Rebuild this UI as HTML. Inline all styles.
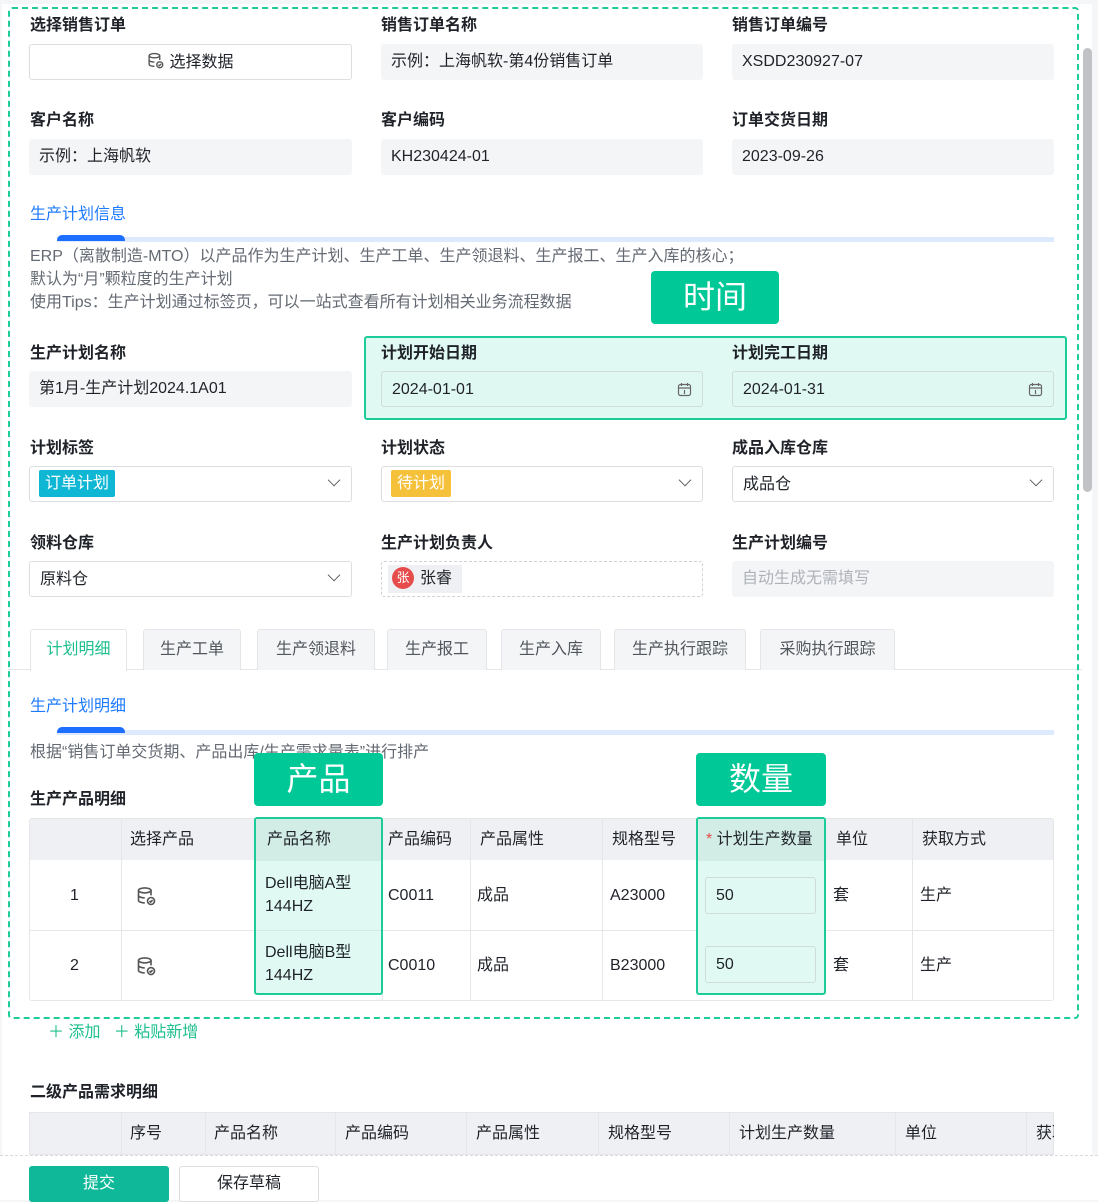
<!DOCTYPE html>
<html><head><meta charset="utf-8"><style>
*{box-sizing:border-box;margin:0;padding:0}
body{width:1098px;height:1200px;overflow:hidden;background:#f5f6f7;font-family:"Liberation Sans","Noto Sans CJK SC",sans-serif;color:#1f2329;position:relative}
.a{position:absolute}
.card{left:2px;top:4px;width:1090px;height:1196px;background:#fff}
.lb{font-size:16px;font-weight:bold;color:#1f2329;line-height:20px}
.in{height:36px;border-radius:3px;font-size:16px;line-height:36px;padding-left:10px;color:#1f2329}
.gray{background:#f4f5f7}
.bd{background:#fff;border:1px solid #dcdee2}
.sec{font-size:16px;color:#1e7bff;line-height:20px}
.bar{height:5px;background:#dde9fc}
.barb{height:6px;background:#1e6fff;border-radius:5px 5px 0 0;width:68px}
.txt{font-size:16px;color:#646a73}
.badge{background:#00c896;color:#fff;font-size:32px;text-align:center;border-radius:4px;line-height:52px}
.chev{position:absolute;right:12px;top:8px;width:10px;height:10px;border-right:1.5px solid #555;border-bottom:1.5px solid #555;transform:rotate(45deg) scale(.9)}
.tab{top:629px;height:41px;background:#f4f5f7;border:1px solid #e3e5e8;border-bottom:none;border-radius:3px 3px 0 0;font-size:16px;color:#51565d;text-align:center;line-height:40px}
.th{background:#eff0f3;font-size:16px;color:#1f2329;line-height:20px}
.cell{font-size:16px;color:#1f2329;line-height:20px;height:20px}
.vl{width:1px;background:#e5e6e8}
.hl{height:1px;background:#e5e6e8}
.cal{position:absolute;right:10px;top:10px}
</style></head><body>
<div class="a card"></div>
<div class="a" style="left:1083px;top:48px;width:9px;height:444px;background:#c1c2c6;border-radius:5px"></div>

<div class="a lb" style="left:30px;top:16px">选择销售订单</div>
<div class="a lb" style="left:381px;top:16px">销售订单名称</div>
<div class="a lb" style="left:732px;top:16px">销售订单编号</div>
<div class="a in bd" style="left:29px;top:44px;width:323px;text-align:center;padding:0">
<svg width="17" height="17" viewBox="0 0 16 16" style="vertical-align:-2px;margin-right:5px" fill="none" stroke="#555" stroke-width="1.3"><ellipse cx="7" cy="3.5" rx="5" ry="2"/><path d="M2 3.5v8c0 1.1 2.2 2 5 2M12 3.5v4M2 7.5c0 1.1 2.2 2 5 2"/><circle cx="12" cy="12" r="2.8"/><path d="M10.8 12l.9.9 1.6-1.6"/></svg>选择数据</div>
<div class="a in gray" style="left:381px;top:44px;width:322px">示例：上海帆软-第4份销售订单</div>
<div class="a in gray" style="left:732px;top:44px;width:322px">XSDD230927-07</div>
<div class="a lb" style="left:30px;top:111px">客户名称</div>
<div class="a lb" style="left:381px;top:111px">客户编码</div>
<div class="a lb" style="left:732px;top:111px">订单交货日期</div>
<div class="a in gray" style="left:29px;top:139px;width:323px">示例：上海帆软</div>
<div class="a in gray" style="left:381px;top:139px;width:322px">KH230424-01</div>
<div class="a in gray" style="left:732px;top:139px;width:322px">2023-09-26</div>

<div class="a sec" style="left:30px;top:205px">生产计划信息</div>
<div class="a bar" style="left:57px;top:237px;width:997px"></div>
<div class="a barb" style="left:57px;top:235px"></div>
<div class="a txt" style="left:30px;top:245px;line-height:23px">ERP（离散制造-MTO）以产品作为生产计划、生产工单、生产领退料、生产报工、生产入库的核心；<br>默认为“月”颗粒度的生产计划<br>使用Tips：生产计划通过标签页，可以一站式查看所有计划相关业务流程数据</div>
<div class="a badge" style="left:651px;top:271px;width:128px;height:53px">时间</div>

<div class="a" style="left:364px;top:336px;width:703px;height:84px;background:#e0faf3;border:2px solid #1ccc98;border-radius:3px"></div>
<div class="a lb" style="left:30px;top:344px">生产计划名称</div>
<div class="a lb" style="left:381px;top:344px">计划开始日期</div>
<div class="a lb" style="left:732px;top:344px">计划完工日期</div>
<div class="a in gray" style="left:29px;top:371px;width:323px">第1月-生产计划2024.1A01</div>
<div class="a in" style="left:381px;top:371px;width:322px;border:1px solid #cfdcd8;background:#e0f8f2">2024-01-01<svg class="cal" width="15" height="15" viewBox="0 0 15 15" fill="none" stroke="#666" stroke-width="1.2"><rect x="1.5" y="2.5" width="12" height="11" rx="2"/><path d="M4.5 1v3M10.5 1v3M1.5 6h12M7.5 8v4"/></svg></div>
<div class="a in" style="left:732px;top:371px;width:322px;border:1px solid #cfdcd8;background:#e0f8f2">2024-01-31<svg class="cal" width="15" height="15" viewBox="0 0 15 15" fill="none" stroke="#666" stroke-width="1.2"><rect x="1.5" y="2.5" width="12" height="11" rx="2"/><path d="M4.5 1v3M10.5 1v3M1.5 6h12M7.5 8v4"/></svg></div>

<div class="a lb" style="left:30px;top:439px">计划标签</div>
<div class="a lb" style="left:381px;top:439px">计划状态</div>
<div class="a lb" style="left:732px;top:439px">成品入库仓库</div>
<div class="a in bd" style="left:29px;top:466px;width:323px;padding-left:9px"><span style="display:inline-block;background:#10b7d4;color:#fff;line-height:27px;padding:0 6px;border-radius:2px;vertical-align:1px">订单计划</span><i class="chev"></i></div>
<div class="a in bd" style="left:381px;top:466px;width:322px;padding-left:9px"><span style="display:inline-block;background:#f5c13a;color:#fff;line-height:27px;padding:0 6px;border-radius:2px;vertical-align:1px">待计划</span><i class="chev"></i></div>
<div class="a in bd" style="left:732px;top:466px;width:322px">成品仓<i class="chev"></i></div>

<div class="a lb" style="left:30px;top:534px">领料仓库</div>
<div class="a lb" style="left:381px;top:534px">生产计划负责人</div>
<div class="a lb" style="left:732px;top:534px">生产计划编号</div>
<div class="a in bd" style="left:29px;top:561px;width:323px">原料仓<i class="chev"></i></div>
<div class="a in" style="left:381px;top:561px;width:322px;border:1px dashed #d0d2d6;padding-left:6px"><span style="display:inline-block;background:#eff0f3;line-height:28px;padding:0 10px 0 4px;vertical-align:1px"><span style="display:inline-block;width:22px;height:22px;border-radius:50%;background:#e64c4c;color:#fff;font-size:13px;line-height:22px;text-align:center;margin-right:6px;vertical-align:1px">张</span>张睿</span></div>
<div class="a in gray" style="left:732px;top:561px;width:322px;color:#aeb2b8">自动生成无需填写</div>

<div class="a" style="left:8px;top:669px;width:1074px;height:1px;background:#e5e6e8"></div>
<div class="a tab" style="left:30px;width:97px;background:#fff;color:#1dbf8e;height:42px">计划明细</div>
<div class="a tab" style="left:143px;width:98px">生产工单</div>
<div class="a tab" style="left:257px;width:118px">生产领退料</div>
<div class="a tab" style="left:387px;width:100px">生产报工</div>
<div class="a tab" style="left:501px;width:100px">生产入库</div>
<div class="a tab" style="left:614px;width:132px">生产执行跟踪</div>
<div class="a tab" style="left:760px;width:135px">采购执行跟踪</div>

<div class="a sec" style="left:30px;top:697px">生产计划明细</div>
<div class="a bar" style="left:57px;top:730px;width:997px"></div>
<div class="a barb" style="left:57px;top:727px"></div>
<div class="a txt" style="left:30px;top:738px">根据“销售订单交货期、产品出库/生产需求量表”进行排产</div>
<div class="a lb" style="left:30px;top:790px">生产产品明细</div>

<div class="a" style="left:29px;top:818px;width:1025px;height:183px;border:1px solid #e5e6e8;border-radius:3px;background:#fff"></div>
<div class="a th" style="left:30px;top:819px;width:1023px;height:41px"></div>
<div class="a hl" style="left:30px;top:930px;width:1023px"></div>
<div class="a vl" style="left:121px;top:819px;height:181px"></div>
<div class="a vl" style="left:382px;top:819px;height:181px"></div>
<div class="a vl" style="left:470px;top:819px;height:181px"></div>
<div class="a vl" style="left:602px;top:819px;height:181px"></div>
<div class="a vl" style="left:912px;top:819px;height:181px"></div>
<div class="a th" style="left:130px;top:830px;background:none">选择产品</div>
<div class="a th" style="left:388px;top:830px;background:none">产品编码</div>
<div class="a th" style="left:480px;top:830px;background:none">产品属性</div>
<div class="a th" style="left:612px;top:830px;background:none">规格型号</div>
<div class="a th" style="left:836px;top:830px;background:none">单位</div>
<div class="a th" style="left:922px;top:830px;background:none">获取方式</div>
<div class="a cell" style="left:70px;top:886px">1</div>
<div class="a cell" style="left:70px;top:956px">2</div>
<svg class="a" style="left:136px;top:886px" width="20" height="20" viewBox="0 0 16 16" fill="none" stroke="#555" stroke-width="1.3"><ellipse cx="7" cy="3.5" rx="5" ry="2"/><path d="M2 3.5v8c0 1.1 2.2 2 5 2M12 3.5v4M2 7.5c0 1.1 2.2 2 5 2"/><circle cx="12" cy="12" r="2.8"/><path d="M10.8 12l.9.9 1.6-1.6"/></svg>
<svg class="a" style="left:136px;top:956px" width="20" height="20" viewBox="0 0 16 16" fill="none" stroke="#555" stroke-width="1.3"><ellipse cx="7" cy="3.5" rx="5" ry="2"/><path d="M2 3.5v8c0 1.1 2.2 2 5 2M12 3.5v4M2 7.5c0 1.1 2.2 2 5 2"/><circle cx="12" cy="12" r="2.8"/><path d="M10.8 12l.9.9 1.6-1.6"/></svg>
<div class="a cell" style="left:388px;top:886px">C0011</div>
<div class="a cell" style="left:388px;top:956px">C0010</div>
<div class="a cell" style="left:477px;top:886px">成品</div>
<div class="a cell" style="left:477px;top:956px">成品</div>
<div class="a cell" style="left:610px;top:886px">A23000</div>
<div class="a cell" style="left:610px;top:956px">B23000</div>
<div class="a cell" style="left:833px;top:886px">套</div>
<div class="a cell" style="left:833px;top:956px">套</div>
<div class="a cell" style="left:920px;top:886px">生产</div>
<div class="a cell" style="left:920px;top:956px">生产</div>

<div class="a" style="left:254px;top:817px;width:129px;height:178px;border:2px solid #1ccc98;border-radius:3px;background:#e0faf3;overflow:hidden">
<div style="height:42px;background:#d2ece6;font-size:16px;line-height:20px;padding:11px 0 0 11px">产品名称</div>
<div style="height:70px;border-bottom:1px solid #d6e8e3;font-size:16px;line-height:23px;padding:11px 0 0 9px">Dell电脑A型<br>144HZ</div>
<div style="font-size:16px;line-height:23px;padding:10px 0 0 9px">Dell电脑B型<br>144HZ</div>
</div>
<div class="a" style="left:696px;top:817px;width:130px;height:178px;border:2px solid #1ccc98;border-radius:3px;background:#e0faf3;overflow:hidden">
<div style="height:42px;background:#d2ece6;font-size:16px;line-height:20px;padding:11px 0 0 8px;white-space:nowrap"><span style="color:#e34d4d">*</span> 计划生产数量</div>
<div style="height:70px;padding-top:16px;padding-left:7px"><div style="width:111px;height:37px;border:1px solid #cfdcd8;border-radius:3px;font-size:16px;line-height:35px;padding-left:10px">50</div></div>
<div style="padding-top:15px;padding-left:7px"><div style="width:111px;height:37px;border:1px solid #cfdcd8;border-radius:3px;font-size:16px;line-height:35px;padding-left:10px">50</div></div>
</div>
<div class="a badge" style="left:254px;top:753px;width:129px;height:53px">产品</div>
<div class="a badge" style="left:696px;top:753px;width:130px;height:53px">数量</div>

<div class="a" style="left:8px;top:7px;width:1071px;height:1012px;border:2px dashed #1dcc98;border-radius:4px"></div>

<div class="a" style="left:48px;top:1018px;font-size:16px;color:#1dbf8e">＋ 添加 &nbsp; ＋ 粘贴新增</div>
<div class="a lb" style="left:30px;top:1083px">二级产品需求明细</div>
<div class="a th" style="left:29px;top:1112px;width:1025px;height:43px;border:1px solid #e5e6e8"></div>
<div class="a vl" style="left:121px;top:1112px;height:43px"></div>
<div class="a vl" style="left:205px;top:1112px;height:43px"></div>
<div class="a vl" style="left:335px;top:1112px;height:43px"></div>
<div class="a vl" style="left:466px;top:1112px;height:43px"></div>
<div class="a vl" style="left:598px;top:1112px;height:43px"></div>
<div class="a vl" style="left:729px;top:1112px;height:43px"></div>
<div class="a vl" style="left:895px;top:1112px;height:43px"></div>
<div class="a vl" style="left:1026px;top:1112px;height:43px"></div>
<div class="a th" style="left:130px;top:1124px;background:none">序号</div>
<div class="a th" style="left:214px;top:1124px;background:none">产品名称</div>
<div class="a th" style="left:345px;top:1124px;background:none">产品编码</div>
<div class="a th" style="left:476px;top:1124px;background:none">产品属性</div>
<div class="a th" style="left:608px;top:1124px;background:none">规格型号</div>
<div class="a th" style="left:739px;top:1124px;background:none">计划生产数量</div>
<div class="a th" style="left:905px;top:1124px;background:none">单位</div>
<div class="a th" style="left:1036px;top:1124px;background:none;width:18px;overflow:hidden;white-space:nowrap">获取</div>

<div class="a" style="left:0;top:1155px;width:1098px;height:45px;background:#fff;border-top:1px dashed #d8dadd"></div>
<div class="a" style="left:29px;top:1166px;width:140px;height:36px;background:#0fb898;color:#fff;border-radius:3px;font-size:16px;text-align:center;line-height:36px">提交</div>
<div class="a" style="left:179px;top:1166px;width:140px;height:36px;background:#fff;border:1px solid #dcdee2;border-radius:3px;font-size:16px;text-align:center;line-height:34px">保存草稿</div>
</body></html>
